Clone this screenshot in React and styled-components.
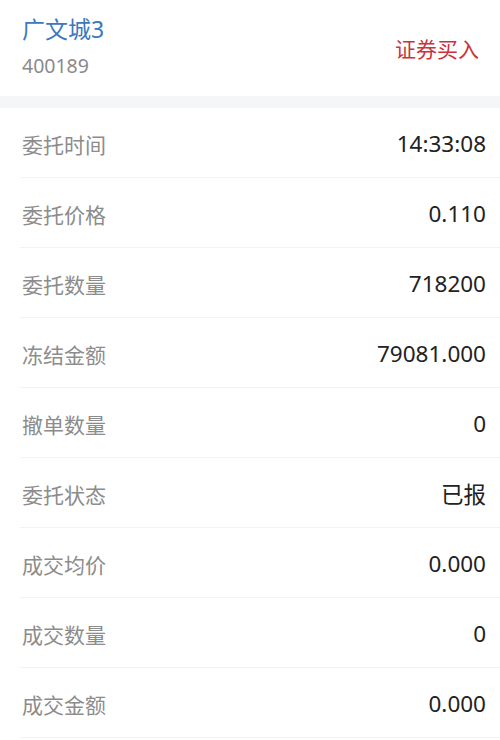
import React from "react";
import styled, { createGlobalStyle } from "styled-components";

const Global = createGlobalStyle`
  html, body { margin: 0; padding: 0; background: #ffffff; }
  body { font-family: "Noto Sans", "Noto Sans CJK SC", sans-serif; }
`;

const Page = styled.div`
  width: 500px;
  background: #ffffff;
`;

const Header = styled.div`
  height: 96px;
  display: flex;
  align-items: center;
  justify-content: space-between;
  padding: 0 22px;
  box-sizing: border-box;
`;

const TitleBlock = styled.div`
  display: flex;
  flex-direction: column;
`;

const Title = styled.div`
  font-size: 23px;
  color: #3b78c0;
  line-height: 30px;
  margin-top: -4px;
`;

const Code = styled.div`
  font-size: 19.5px;
  color: #8a8a8a;
  line-height: 24px;
  margin-top: 10px;
`;

const Direction = styled.div`
  font-size: 21px;
  color: #c9343c;
  margin-right: -1px;
`;

const Band = styled.div`
  height: 12px;
  background: #f5f6f8;
`;

const List = styled.div`
  padding-left: 20px;
`;

const Row = styled.div`
  height: 70px;
  display: flex;
  align-items: center;
  justify-content: space-between;
  padding-right: 14px;
  border-bottom: 1px solid #f3f3f3;
  box-sizing: border-box;
`;

const Label = styled.span`
  font-size: 21px;
  color: #8c8c8c;
  padding-left: 2px;
  margin-top: 2px;
`;

const Value = styled.span`
  font-size: 22.5px;
  color: #222222;
  margin-top: 1px;
`;

const rows = [
  ["委托时间", "14:33:08"],
  ["委托价格", "0.110"],
  ["委托数量", "718200"],
  ["冻结金额", "79081.000"],
  ["撤单数量", "0"],
  ["委托状态", "已报"],
  ["成交均价", "0.000"],
  ["成交数量", "0"],
  ["成交金额", "0.000"],
];

export default function App() {
  return (
    <Page>
      <Global />
      <Header>
        <TitleBlock>
          <Title>广文城3</Title>
          <Code>400189</Code>
        </TitleBlock>
        <Direction>证券买入</Direction>
      </Header>
      <Band />
      <List>
        {rows.map(([k, v]) => (
          <Row key={k}>
            <Label>{k}</Label>
            <Value>{v}</Value>
          </Row>
        ))}
      </List>
    </Page>
  );
}
